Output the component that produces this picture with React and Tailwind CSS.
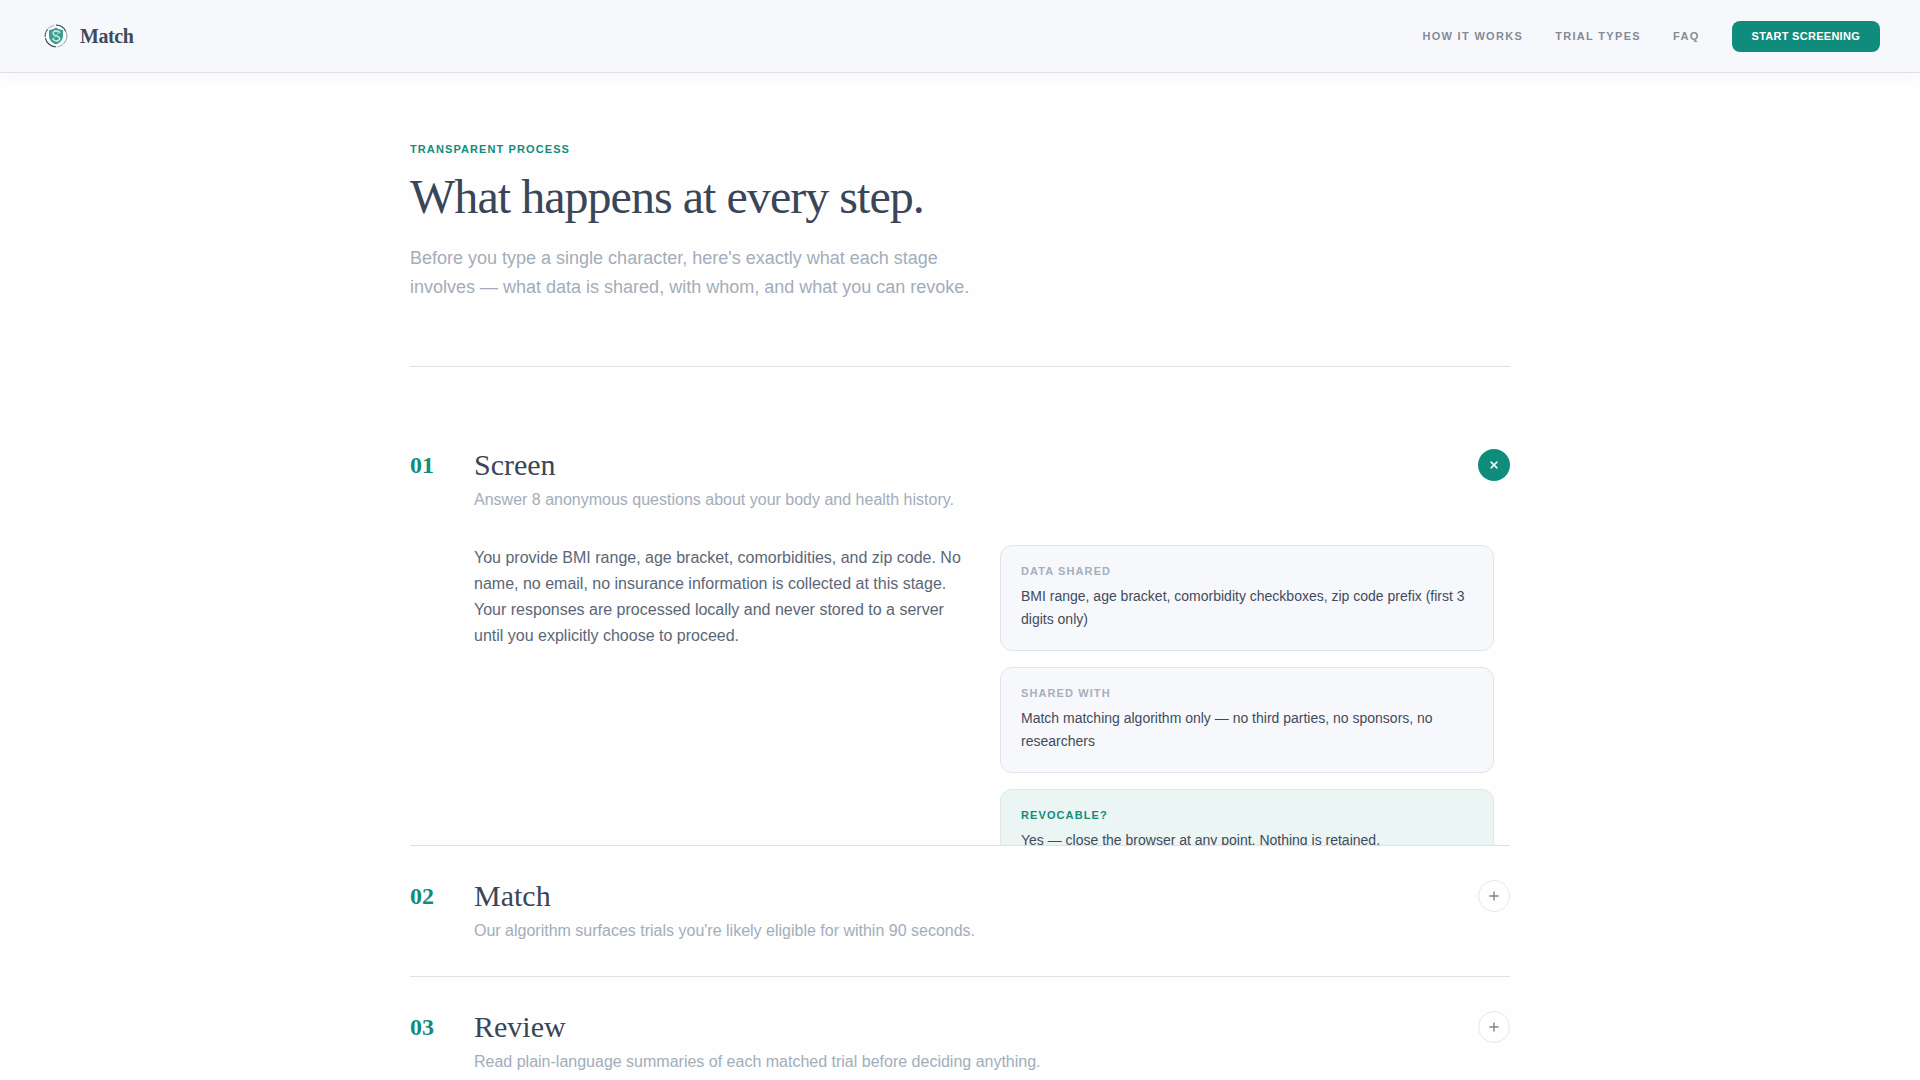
import { useState } from "react";
import { Plus } from "lucide-react";

const NAV_LINKS = [
  { label: "How it works", href: "#how" },
  { label: "Trial types", href: "#trials" },
  { label: "FAQ", href: "#faq" },
];

const STEPS = [
  {
    number: "01",
    title: "Screen",
    summary: "Answer 8 anonymous questions about your body and health history.",
    detail:
      "You provide BMI range, age bracket, comorbidities, and zip code. No name, no email, no insurance information is collected at this stage. Your responses are processed locally and never stored to a server until you explicitly choose to proceed.",
    shared: "BMI range, age bracket, comorbidity checkboxes, zip code prefix (first 3 digits only)",
    sharedWith: "Match matching algorithm only — no third parties, no sponsors, no researchers",
    revocable: "Yes — close the browser at any point. Nothing is retained.",
  },
  {
    number: "02",
    title: "Match",
    summary: "Our algorithm surfaces trials you're likely eligible for within 90 seconds.",
  },
  {
    number: "03",
    title: "Review",
    summary: "Read plain-language summaries of each matched trial before deciding anything.",
  },
];

function Logo() {
  return (
    <svg className="w-8 h-8" viewBox="0 0 32 32" fill="none" aria-hidden="true">
      <circle cx="16" cy="16" r="11" fill="#fff" />
      <g strokeWidth="1.2">
        <path d="M16 5.2a10.8 10.8 0 0 1 9.8 6.2" stroke="#3d4a57" />
        <path d="M26.1 12a10.8 10.8 0 0 1-2.7 11.700" stroke="#a3abb4" />
        <path d="M22.600 24.500a10.8 10.8 0 0 1-5.6 2.300" stroke="#b7bec6" />
        <path d="M15.800 26.8A10.8 10.8 0 0 1 5.4 18.2" stroke="#3d4a57" />
        <path d="M5.2 17a10.8 10.8 0 0 1 2.5-7.9" stroke="#64707b" />
        <path d="M8.2 8.500A10.8 10.8 0 0 1 14.600 5.300" stroke="#b7bec6" />
      </g>
      <path d="M16 7.600c2 1.600 4.500 2.400 7 2.500v5.700c0 4-2.700 6.900-7 8.700-4.300-1.800-7-4.700-7-8.700v-5.700c2.500-.1 5-.9 7-2.500z" fill="#3a9e90" />
      <path
        d="M19.800 12.400c-1.700-2.100-6.800-1.800-6.800.9 0 2.900 6.600 2.300 6.600 5.200 0 2.600-4.600 3.100-6.800.8"
        stroke="#dcefed"
        strokeWidth="1.3"
        strokeLinecap="round"
      />
      <path d="M14 10.400c5 1.300 5.400 3.700 1.800 5.500-3.800 1.900-2.600 4.600 2 5.700" stroke="#c3dfe0" strokeWidth="0.9" />
    </svg>
  );
}

function InfoCard({ label, children, accent }) {
  return (
    <div
      className={
        accent
          ? "rounded-xl border border-[#dde7e8] bg-[#ebf5f3] px-5 pt-5 pb-[19px]"
          : "rounded-xl border border-[#dfe4e8] bg-[#f7f8fc] px-5 pt-5 pb-[19px]"
      }
    >
      <dt
        className={
          accent
            ? "text-[11px] leading-none font-bold uppercase tracking-widest text-[#128c7c]"
            : "text-[11px] leading-none font-bold uppercase tracking-widest text-[#a6afba]"
        }
      >
        {label}
      </dt>
      <dd className="mt-2 text-sm leading-[23px] text-[#3f4b5b]">{children}</dd>
    </div>
  );
}

function Step({ step, open, onToggle }) {
  return (
    <li className="border-b border-[#dce3e6]">
      <button
        type="button"
        onClick={onToggle}
        aria-expanded={open}
        className="w-full py-8 flex items-start text-left cursor-pointer"
      >
        <span className="w-16 shrink-0 font-['Liberation_Serif',serif] text-2xl leading-[36px] font-bold text-[#128c7c]">
          {step.number}
        </span>
        <span className="flex-1 min-w-0">
          <span className="block font-['Liberation_Serif',serif] text-3xl leading-[36px] text-[#3a4657]">
            {step.title}
          </span>
          <span className="block mt-1 text-base leading-[26px] text-[#a3adba]">{step.summary}</span>
        </span>
        <span
          className={
            open
              ? "mt-0.5 w-8 h-8 shrink-0 rounded-full flex items-center justify-center rotate-45 bg-[#0f8c7c] text-white"
              : "mt-0.5 w-8 h-8 shrink-0 rounded-full flex items-center justify-center border border-[#e4e8ec] text-[#7f8791]"
          }
        >
          <Plus size={14} strokeWidth={2.5} />
        </span>
      </button>

      {open && step.detail && (
        <div className="max-h-[300px] overflow-hidden">
          <div className="pl-16 pr-4 pb-10 grid grid-cols-2 gap-8">
            <p className="text-base leading-[26px] text-[#5b6777]">{step.detail}</p>
            <dl className="flex flex-col gap-4">
              <InfoCard label="Data shared">{step.shared}</InfoCard>
              <InfoCard label="Shared with">{step.sharedWith}</InfoCard>
              <InfoCard label="Revocable?" accent>
                {step.revocable}
              </InfoCard>
            </dl>
          </div>
        </div>
      )}
    </li>
  );
}

export default function App() {
  const [openStep, setOpenStep] = useState("01");

  return (
    <div className="min-h-screen bg-[#fefefe] font-['Liberation_Sans',Arial,sans-serif]">
      <header className="sticky top-0 z-10 border-b border-[#dfe3e8] bg-[#f7f8fc] shadow-[0_4px_12px_rgba(0,0,0,0.03)]">
        <div className="h-[72px] px-10 flex items-center justify-between">
          <a href="#top" className="flex items-center gap-2">
            <Logo />
            <span className="font-['Liberation_Serif',serif] text-xl font-bold tracking-[-0.02em] text-[#3f4b5a]">
              Match
            </span>
          </a>

          <nav className="flex items-center gap-8">
            {NAV_LINKS.map((link) => (
              <a
                key={link.href}
                href={link.href}
                className="text-[11px] leading-4 font-bold uppercase tracking-[0.12em] text-[#848b94]"
              >
                {link.label}
              </a>
            ))}
            <button
              type="button"
              className="h-[31px] px-5 rounded-lg bg-[#0f8c7c] text-[11px] leading-4 font-bold uppercase tracking-[0.025em] text-white cursor-pointer"
            >
              Start screening
            </button>
          </nav>
        </div>
      </header>

      <main id="how" className="max-w-[1100px] mx-auto pt-[68px]">
        <div className="pb-16 border-b border-[#dce3e6]">
          <p className="text-[11px] leading-4 font-bold uppercase tracking-widest text-[#128c7c]">
            Transparent process
          </p>
          <h1 className="mt-3 font-['Liberation_Serif',serif] text-5xl leading-[55px] tracking-[-0.02em] text-[#3a4657]">
            What happens at every step.
          </h1>
          <p className="mt-5 max-w-xl text-lg leading-[29px] text-[#a3adba]">
            Before you type a single character, here's exactly what each stage involves — what data is shared, with
            whom, and what you can revoke.
          </p>
        </div>

        <ol className="pt-12">
          {STEPS.map((step) => (
            <Step
              key={step.number}
              step={step}
              open={openStep === step.number}
              onToggle={() => setOpenStep(openStep === step.number ? null : step.number)}
            />
          ))}
        </ol>
      </main>
    </div>
  );
}
